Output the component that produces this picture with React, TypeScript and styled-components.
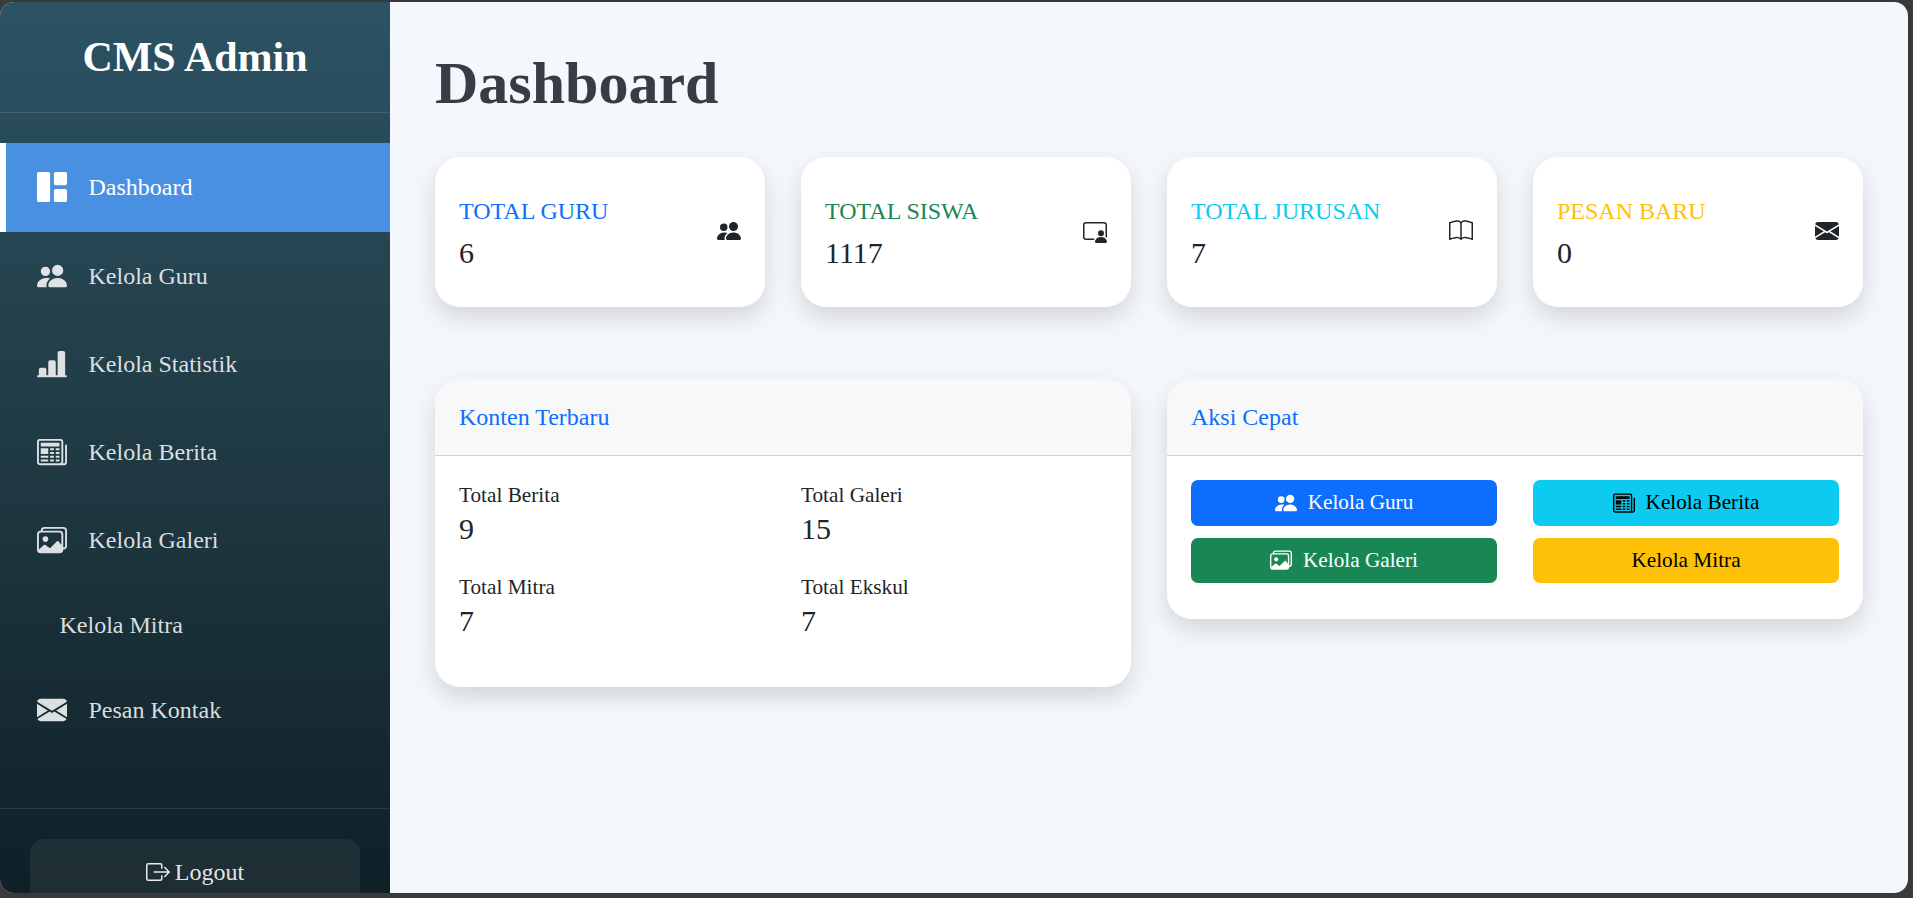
import { ReactNode } from 'react'
import styled, { createGlobalStyle } from 'styled-components'
import {
  BsBarChartLineFill,
  BsBook,
  BsBoxArrowRight,
  BsEnvelopeFill,
  BsGrid1X2Fill,
  BsImages,
  BsNewspaper,
  BsPeopleFill,
  BsPersonVideo3,
} from 'react-icons/bs'

const GlobalStyle = createGlobalStyle`
  * {
    box-sizing: border-box;
  }
  html, body {
    margin: 0;
    height: 100%;
    background: #3a3a3a;
    overflow: hidden;
  }
  body {
    font-family: 'Liberation Serif', 'Times New Roman', serif;
    color: #212529;
  }
`

const Frame = styled.div`
  display: flex;
  width: 1908px;
  height: 891px;
  margin-top: 2px;
  border-radius: 14px;
  overflow: hidden;
  background: #f4f7fb;
`

const Sidebar = styled.aside`
  flex: 0 0 390px;
  display: flex;
  flex-direction: column;
  overflow: hidden;
  background: linear-gradient(180deg, #2c5364 0%, #203a43 50%, #0f2027 100%);
`

const Brand = styled.div`
  flex: none;
  height: 111px;
  padding-top: 31px;
  text-align: center;
  font-size: 42px;
  line-height: 48px;
  font-weight: 700;
  color: #fff;
  border-bottom: 1px solid rgba(255, 255, 255, 0.12);
`

const Nav = styled.nav`
  flex: none;
  height: 695px;
  padding-top: 30px;
`

const NavItem = styled.a<{ $active?: boolean }>`
  display: flex;
  align-items: center;
  padding: 23px 0 ${(p) => (p.$active ? 24 : 23)}px 30.5px;
  border-left: 6px solid ${(p) => (p.$active ? '#fff' : 'transparent')};
  background: ${(p) => (p.$active ? '#4a90e2' : 'transparent')};
  color: ${(p) => (p.$active ? '#fff' : 'rgba(255, 255, 255, 0.85)')};
  font-size: 24px;
  line-height: 36px;
`

const NavIcon = styled.span`
  display: flex;
  align-items: center;
  justify-content: center;
  width: 30px;
  height: 42px;
  margin-right: 22px;
  font-size: 30px;
`

const NavSpacer = styled.span`
  width: 0;
  margin-right: 23px;
`

const SidebarFooter = styled.div`
  flex: none;
  padding: 30px;
  border-top: 1px solid rgba(255, 255, 255, 0.1);
`

const LogoutButton = styled.button`
  display: flex;
  align-items: center;
  justify-content: center;
  gap: 5px;
  width: 100%;
  height: 66px;
  border: 0;
  border-radius: 14px;
  background: rgba(255, 255, 255, 0.06);
  color: rgba(255, 255, 255, 0.9);
  font: inherit;
  font-size: 24px;
`

const Main = styled.main`
  flex: 1;
  padding: 45px;
`

const PageTitle = styled.h1`
  margin: 0 0 38px;
  font-size: 60px;
  line-height: 72px;
  font-weight: 700;
  color: #3a3b45;
`

const StatGrid = styled.div`
  display: grid;
  grid-template-columns: repeat(4, 1fr);
  gap: 36px;
  margin-bottom: 72px;
`

const StatCard = styled.div`
  display: flex;
  align-items: center;
  justify-content: space-between;
  height: 150px;
  padding: 0 24px;
  border-radius: 25px;
  background: #fff;
  box-shadow: 0 10px 25px rgba(0, 0, 0, 0.14);
`

const StatLabel = styled.div<{ $color: string }>`
  margin-bottom: 7px;
  font-size: 24px;
  line-height: 34px;
  color: ${(p) => p.$color};
`

const BigNumber = styled.div`
  font-size: 30px;
  line-height: 36px;
  color: #212529;
`

const StatIcon = styled.span`
  display: flex;
  padding-bottom: 2px;
  font-size: 24px;
  color: #212529;
`

const PanelGrid = styled.div`
  display: grid;
  grid-template-columns: repeat(2, 1fr);
  gap: 36px;
  align-items: start;
`

const Panel = styled.section`
  border-radius: 25px;
  background: #fff;
  overflow: hidden;
  box-shadow: 0 10px 25px rgba(0, 0, 0, 0.14);
`

const PanelHeader = styled.div`
  height: 77px;
  padding: 20px 24px;
  font-size: 24px;
  line-height: 36px;
  color: #0d6efd;
  background: #f8f8f8;
  border-bottom: 1px solid #d0d0d2;
`

const PanelBody = styled.div<{ $bottom: number }>`
  padding: 24px 24px ${(p) => p.$bottom}px;
`

const InfoGrid = styled.div`
  display: grid;
  grid-template-columns: repeat(2, 1fr);
  gap: 25px 36px;
`

const InfoLabel = styled.div`
  font-size: 21.25px;
  line-height: 31px;
`

const ActionGrid = styled.div`
  display: grid;
  grid-template-columns: repeat(2, 1fr);
  gap: 12px 36px;
`

const ActionButton = styled.button<{ $bg: string; $fg: string }>`
  display: flex;
  align-items: center;
  justify-content: center;
  height: 45.5px;
  padding: 0;
  border: 0;
  border-radius: 7px;
  background: ${(p) => p.$bg};
  color: ${(p) => p.$fg};
  font: inherit;
  font-size: 21.25px;

  svg {
    margin-right: 11px;
    font-size: 22px;
  }
`

type NavEntry = { label: string; icon?: ReactNode; active?: boolean }

const navItems: NavEntry[] = [
  { label: 'Dashboard', icon: <BsGrid1X2Fill />, active: true },
  { label: 'Kelola Guru', icon: <BsPeopleFill /> },
  { label: 'Kelola Statistik', icon: <BsBarChartLineFill /> },
  { label: 'Kelola Berita', icon: <BsNewspaper /> },
  { label: 'Kelola Galeri', icon: <BsImages /> },
  { label: 'Kelola Mitra' },
  { label: 'Pesan Kontak', icon: <BsEnvelopeFill /> },
]

const stats = [
  { label: 'TOTAL GURU', value: 6, color: '#0d6efd', icon: <BsPeopleFill /> },
  { label: 'TOTAL SISWA', value: 1117, color: '#198754', icon: <BsPersonVideo3 /> },
  { label: 'TOTAL JURUSAN', value: 7, color: '#0dcaf0', icon: <BsBook /> },
  { label: 'PESAN BARU', value: 0, color: '#ffc107', icon: <BsEnvelopeFill /> },
]

const contents = [
  { label: 'Total Berita', value: 9 },
  { label: 'Total Galeri', value: 15 },
  { label: 'Total Mitra', value: 7 },
  { label: 'Total Ekskul', value: 7 },
]

const actions = [
  { label: 'Kelola Guru', bg: '#0d6efd', fg: '#fff', icon: <BsPeopleFill /> },
  { label: 'Kelola Berita', bg: '#0dcaf0', fg: '#000', icon: <BsNewspaper /> },
  { label: 'Kelola Galeri', bg: '#198754', fg: '#fff', icon: <BsImages /> },
  { label: 'Kelola Mitra', bg: '#ffc107', fg: '#000' },
]

const App = () => {
  return (
    <>
      <GlobalStyle />
      <Frame>
        <Sidebar>
          <Brand>CMS Admin</Brand>
          <Nav>
            {navItems.map((item) => (
              <NavItem key={item.label} $active={item.active}>
                {item.icon ? <NavIcon>{item.icon}</NavIcon> : <NavSpacer />}
                {item.label}
              </NavItem>
            ))}
          </Nav>
          <SidebarFooter>
            <LogoutButton>
              <BsBoxArrowRight />
              Logout
            </LogoutButton>
          </SidebarFooter>
        </Sidebar>
        <Main>
          <PageTitle>Dashboard</PageTitle>
          <StatGrid>
            {stats.map((stat) => (
              <StatCard key={stat.label}>
                <div>
                  <StatLabel $color={stat.color}>{stat.label}</StatLabel>
                  <BigNumber>{stat.value}</BigNumber>
                </div>
                <StatIcon>{stat.icon}</StatIcon>
              </StatCard>
            ))}
          </StatGrid>
          <PanelGrid>
            <Panel>
              <PanelHeader>Konten Terbaru</PanelHeader>
              <PanelBody $bottom={48}>
                <InfoGrid>
                  {contents.map((item) => (
                    <div key={item.label}>
                      <InfoLabel>{item.label}</InfoLabel>
                      <BigNumber>{item.value}</BigNumber>
                    </div>
                  ))}
                </InfoGrid>
              </PanelBody>
            </Panel>
            <Panel>
              <PanelHeader>Aksi Cepat</PanelHeader>
              <PanelBody $bottom={36}>
                <ActionGrid>
                  {actions.map((action) => (
                    <ActionButton key={action.label} $bg={action.bg} $fg={action.fg}>
                      {action.icon}
                      {action.label}
                    </ActionButton>
                  ))}
                </ActionGrid>
              </PanelBody>
            </Panel>
          </PanelGrid>
        </Main>
      </Frame>
    </>
  )
}

export default App
